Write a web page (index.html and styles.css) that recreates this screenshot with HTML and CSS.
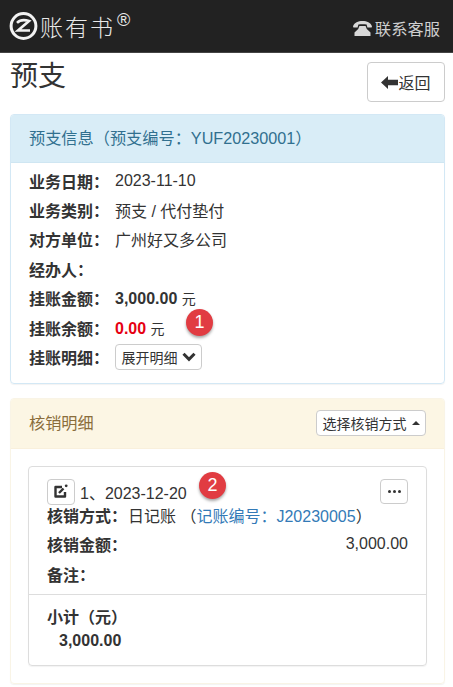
FILE: index.html
```html
<!DOCTYPE html>
<html lang="zh-CN">
<head>
    <meta charset="UTF-8">
    <meta name="viewport" content="width=device-width, initial-scale=1.0">
    <title>预支</title>
    <link rel="stylesheet" href="styles.css">
</head>
<body>

    <!-- Top bar -->
    <nav class="navbar">
        <div class="brand">
            <svg class="brand-logo" width="29" height="28" viewBox="0 0 29 28" fill="none" stroke="#f2f2f2" stroke-width="3">
                <circle cx="14.5" cy="14" r="12.4"/>
                <path d="M8 10.8c3-3 7-3.4 12-1.8L9 18.5h12" stroke-width="2.6"/>
            </svg>
            <span class="brand-name">账有书</span><sup class="brand-mark">®</sup>
        </div>
        <a class="nav-link">
            <svg width="19" height="15" viewBox="0 0 19 15" fill="#d8d8d8">
                <path d="M0 5.2C1.5 1.6 5 0 9.5 0S17.5 1.6 19 5.2L18.6 6.6 14.4 6.6 13.6 3.6C11.2 3 7.8 3 5.4 3.6L4.6 6.6 0.4 6.6Z"/>
                <path d="M6.4 5h6.2l1.2 3L17.5 11.4V15H1.5V11.4L5.2 8Z"/>
            </svg>
            <span>联系客服</span>
        </a>
    </nav>

    <div class="content">
        <div class="page-head">
            <h1>预支</h1>
            <button class="btn btn-back">
                <svg width="17" height="13" viewBox="0 0 17 13" fill="#333"><path d="M0 6.5 7 0V3.8H17V9.2H7V13Z"/></svg>返回
            </button>
        </div>

        <!-- Advance info -->
        <section class="panel panel-info">
            <div class="panel-heading">预支信息（预支编号：YUF20230001）</div>
            <div class="panel-body info-body">
                <div class="info-row"><label>业务日期：</label><span>2023-11-10</span></div>
                <div class="info-row"><label>业务类别：</label><span>预支 / 代付垫付</span></div>
                <div class="info-row"><label>对方单位：</label><span>广州好又多公司</span></div>
                <div class="info-row"><label>经办人：</label></div>
                <div class="info-row"><label>挂账金额：</label><span><b>3,000.00</b> <small>元</small></span></div>
                <div class="info-row"><label>挂账余额：</label><span><b class="red">0.00</b> <small>元</small></span></div>
                <div class="info-row"><label>挂账明细：</label>
                    <button class="btn btn-xs">展开明细
                        <svg width="14" height="10" viewBox="0 0 14 10" fill="none" stroke="#333" stroke-width="3"><path d="M1.5 1.8 7 7.4 12.5 1.8"/></svg>
                    </button>
                </div>
                <span class="badge badge-one">1</span>
            </div>
        </section>

        <!-- Write-off details -->
        <section class="panel panel-warning">
            <div class="panel-heading heading-row">
                <span>核销明细</span>
                <button class="btn btn-xs">选择核销方式 <i class="caret-up"></i></button>
            </div>
            <div class="panel-body">
                <div class="card">
                    <div class="card-main">
                        <div class="card-title">
                            <button class="btn btn-icon">
                                <svg width="16" height="15" viewBox="0 0 16 15" fill="none" stroke="#333" stroke-width="2.4" stroke-linejoin="round">
                                    <path d="M9 3H2.5V12.5H12V8"/>
                                    <path d="M6 9 10.5 4.5" stroke-width="2.4"/>
                                    <circle cx="13.2" cy="1.8" r="1.4" fill="#333" stroke="none"/>
                                </svg>
                            </button>
                            <span>1、2023-12-20</span>
                            <span class="badge badge-two">2</span>
                            <button class="btn btn-more"><i></i><i></i><i></i></button>
                        </div>
                        <div class="card-row first"><label>核销方式：</label><span>日记账 （<a>记账编号：J20230005</a>）</span></div>
                        <div class="card-row spread"><label>核销金额：</label><span>3,000.00</span></div>
                        <div class="card-row"><label>备注：</label></div>
                    </div>
                    <div class="card-foot">
                        <div class="foot-label">小计（元）</div>
                        <div class="foot-value">3,000.00</div>
                    </div>
                </div>
            </div>
        </section>
    </div>

</body>
</html>
```

FILE: styles.css
```css
* {
    box-sizing: border-box;
}
body {
    margin: 0;
    font-family: "Liberation Sans", "Noto Sans CJK SC", sans-serif;
    font-size: 16px;
    color: #333;
    background: #fff;
}
label {
    font-weight: bold;
}
.navbar {
    height: 53px;
    background: #222;
    border-bottom: 1px solid #444;
    display: flex;
    justify-content: space-between;
    align-items: center;
    padding: 0 13px 0 9px;
}
.brand {
    display: flex;
    align-items: center;
    color: #e8e8e8;
}
.brand-name {
    font-size: 23px;
    font-weight: 300;
    letter-spacing: 2px;
    margin-left: 2px;
}
.brand-mark {
    font-size: 18px;
    line-height: 1;
    align-self: flex-start;
    margin-left: 2px;
    margin-top: 2px;
}
.nav-link {
    display: flex;
    align-items: center;
    gap: 3px;
    color: #cfcfcf;
    font-size: 16.3px;
    padding-top: 4px;
}
.content {
    padding: 0 8px 0 10px;
}
.page-head {
    display: flex;
    justify-content: space-between;
    align-items: flex-start;
    height: 61px;
}
h1 {
    margin: 4px 0 0;
    font-size: 28px;
    font-weight: normal;
    line-height: 40px;
}
.btn {
    background: #fff;
    border: 1px solid #ccc;
    border-radius: 4px;
    color: #333;
    font-family: inherit;
    padding: 0;
}
.btn-back {
    width: 78px;
    height: 40px;
    margin-top: 9px;
    font-size: 16px;
    display: flex;
    align-items: center;
    justify-content: center;
}
.btn-xs {
    font-size: 14px;
    height: 26px;
    padding: 0 5.5px;
    display: inline-flex;
    align-items: center;
    gap: 4px;
}
.panel {
    border: 1px solid;
    border-radius: 4px;
    margin-bottom: 14px;
    box-shadow: 0 1px 1px rgba(0, 0, 0, .05);
}
.panel-heading {
    padding: 0 18px;
    font-size: 16.2px;
    line-height: 46px;
    height: 48px;
    border-bottom: 1px solid;
    border-radius: 3px 3px 0 0;
}
.panel-info {
    border-color: #d3e8f5;
}
.panel-info .panel-heading {
    background: #d9edf7;
    color: #31708f;
    border-color: #cfe6f2;
}
.panel-warning {
    border-color: #f9f4e6;
}
.panel-warning .panel-heading {
    background: #fcf6e4;
    color: #8a6d3b;
    border-color: #f9f0dc;
    height: 50px;
}
.heading-row {
    display: flex;
    justify-content: space-between;
    align-items: center;
}
.panel-body {
    position: relative;
    padding: 17px;
}
.info-body {
    padding: 3px 18px 11px;
}
.info-row {
    height: 29.4px;
    display: flex;
    align-items: center;
}
.info-row label {
    width: 86px;
    flex: none;
}
.info-row small {
    font-size: 14px;
}
.red {
    color: #e60012;
}
.badge {
    position: absolute;
    width: 27px;
    height: 27px;
    border-radius: 50%;
    background: #e13c42;
    color: #fff;
    font-size: 18px;
    line-height: 26px;
    text-align: center;
    box-shadow: 0 2px 3px rgba(0, 0, 0, .35);
}
.badge-one {
    left: 175px;
    top: 146px;
}
.badge-two {
    left: 152px;
    top: -7px;
}
.caret-up {
    width: 0;
    height: 0;
    border: 4px solid transparent;
    border-top: 0;
    border-bottom-color: #333;
    margin-left: 1px;
}
.card {
    border: 1px solid #ddd;
    border-radius: 4px;
    box-shadow: 0 1px 1px rgba(0, 0, 0, .05);
}
.card-main {
    padding: 12px 18px 5px;
    border-bottom: 1px solid #ddd;
}
.card-title {
    position: relative;
    display: flex;
    align-items: center;
    gap: 5px;
    height: 26px;
}
.btn-icon {
    width: 28px;
    height: 26px;
    display: flex;
    align-items: center;
    justify-content: center;
}
.btn-more {
    margin-left: auto;
    width: 28px;
    height: 25px;
    display: flex;
    align-items: center;
    justify-content: center;
    gap: 2px;
}
.btn-more i {
    width: 3px;
    height: 3px;
    background: #333;
    border-radius: 50%;
}
.card-row {
    height: 30px;
    display: flex;
    align-items: center;
}
.card-row label {
    width: 81px;
    flex: none;
}
.card-row.first {
    height: 20px;
    margin-bottom: 4px;
}
.card-row a {
    color: #337ab7;
}
.spread {
    justify-content: space-between;
}
.card-foot {
    padding: 11px 18px 13px;
    font-weight: bold;
    line-height: 23px;
}
.foot-value {
    padding-left: 12px;
}
```
